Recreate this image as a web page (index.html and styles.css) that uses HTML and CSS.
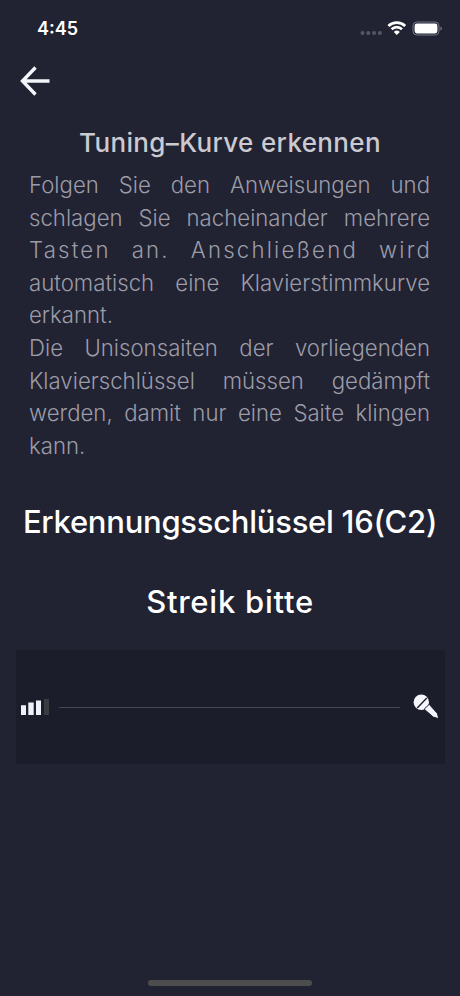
FILE: index.html
```html
<!DOCTYPE html>
<html lang="de">
<head>
<meta charset="utf-8">
<title>Tuning-Kurve erkennen</title>
<link rel="stylesheet" href="styles.css">
</head>
<body>
<div class="screen">
  <header class="status">
    <span class="time">4:45</span>
    <svg class="indicators" width="82" height="16" viewBox="0 0 82 16">
      <g fill="#56566a"><circle cx="2.5" cy="13" r="2"/><circle cx="8.3" cy="13" r="2"/><circle cx="14.1" cy="13" r="2"/><circle cx="19.9" cy="13" r="2"/></g>
      <g fill="none" stroke="#fff" stroke-width="2.7"><path d="M28.4 5.9a12.2 12.2 0 0 1 16.8 0"/><path d="M31.6 9.3a7.4 7.4 0 0 1 10.4 0"/></g>
      <path d="M33.8 12a4.4 4.4 0 0 1 6 0L36.8 15.1z" fill="#fff"/>
      <rect x="53" y="2" width="26" height="13" rx="3.8" fill="none" stroke="#77778a"/>
      <rect x="54.6" y="3.6" width="22.8" height="9.8" rx="2.3" fill="#fff"/>
      <path d="M80.4 6.5q1.5.5 1.5 2t-1.5 2z" fill="#77778a"/>
    </svg>
  </header>
  <nav class="nav">
    <svg width="30" height="30" viewBox="0 0 30 30" fill="none" stroke="#f5f5fc" stroke-width="3.4"><path d="M29.5 15H3M15.5 1.5 2.5 15l13 13.5"/></svg>
  </nav>
  <main>
    <h1 class="title">Tuning–Kurve erkennen</h1>
    <div class="guide">
      <p class="line">Folgen Sie den Anweisungen und</p>
      <p class="line">schlagen Sie nacheinander mehrere</p>
      <p class="line spaced">Tasten an. Anschließend wird</p>
      <p class="line">automatisch eine Klavierstimmkurve</p>
      <p class="line last">erkannt.</p>
      <p class="line">Die Unisonsaiten der vorliegenden</p>
      <p class="line">Klavierschlüssel müssen gedämpft</p>
      <p class="line">werden, damit nur eine Saite klingen</p>
      <p class="line last">kann.</p>
    </div>
    <h2 class="key">Erkennungsschlüssel 16(C2)</h2>
    <h2 class="strike">Streik bitte</h2>
    <section class="meter">
      <svg width="28" height="18" viewBox="0 0 28 18" fill="#f0f0fa"><path d="M0 7.2h5V17H0zM7.3 4.4h5.4V17H7.300zM15 2.4h5V17h-5z"/><path d="M23 1h5v16h-5z" fill="#3a3d3f"/></svg>
      <div class="wave"></div>
      <svg class="mic" width="26" height="26" viewBox="0 0 26 26">
        <circle cx="8.3" cy="8.2" r="7.7" fill="#f5f5fc"/>
        <path d="M4.2 14 13.8 4" stroke="#1c1d2b" stroke-width="1.4"/>
        <path d="m11.2 15.2 5-4.9 8.2 9.1 1.4 5.3-5.5-1.6z" fill="#f5f5fc" stroke="#1c1d2b" stroke-width="1"/>
      </svg>
    </section>
  </main>
  <footer class="home"><div class="home-bar"></div></footer>
</div>
</body>
</html>
```

FILE: styles.css
```css
* { box-sizing: border-box; }

body {
  margin: 0;
  background: #212232;
  color: #fff;
  font-family: Inter, "Liberation Sans", sans-serif;
}

.screen {
  display: flex;
  flex-direction: column;
  height: 996px;
  overflow: hidden;
}

.status {
  display: flex;
  justify-content: space-between;
  height: 57px;
  padding: 17px 18px 0 37px;
}

.time {
  font-size: 18px;
  line-height: 24px;
  font-weight: 600;
}

.indicators { margin-top: 3px; }

.nav {
  height: 66px;
  padding: 9px 0 0 20px;
}

main { flex: 1; }

h1, h2, p { margin: 0; white-space: nowrap; }

.title {
  font-size: 26px;
  line-height: 40px;
  font-weight: 500;
  letter-spacing: 0.35px;
  color: #cacad0;
  text-align: center;
}

.guide {
  padding: 6px 30px 0 29px;
  color: #9c9ca8;
}

.line {
  font-size: 22.2px;
  font-weight: 300;
  line-height: 32.6px;
  text-align-last: justify;
}

.line.last { text-align-last: left; }

.spaced { letter-spacing: 2.2px; margin-right: -2px; }

.key, .strike {
  font-size: 31px;
  line-height: 40px;
  font-weight: 500;
  text-align: center;
}

.key {
  margin-top: 40px;
  letter-spacing: -0.26px;
}

.strike {
  margin-top: 40px;
  letter-spacing: 0.75px;
}

.meter {
  display: flex;
  align-items: center;
  height: 114px;
  margin: 28px 15px 0 16px;
  padding: 0 6px 0 5px;
  background: #1c1d2b;
}

.wave {
  flex: 1;
  height: 1px;
  margin: 0 13px 0 10px;
  background: #464653;
}

.home {
  display: flex;
  justify-content: center;
  height: 16px;
}

.home-bar {
  width: 164px;
  height: 6px;
  border-radius: 3px;
  background: #4d4d4d;
}
```
